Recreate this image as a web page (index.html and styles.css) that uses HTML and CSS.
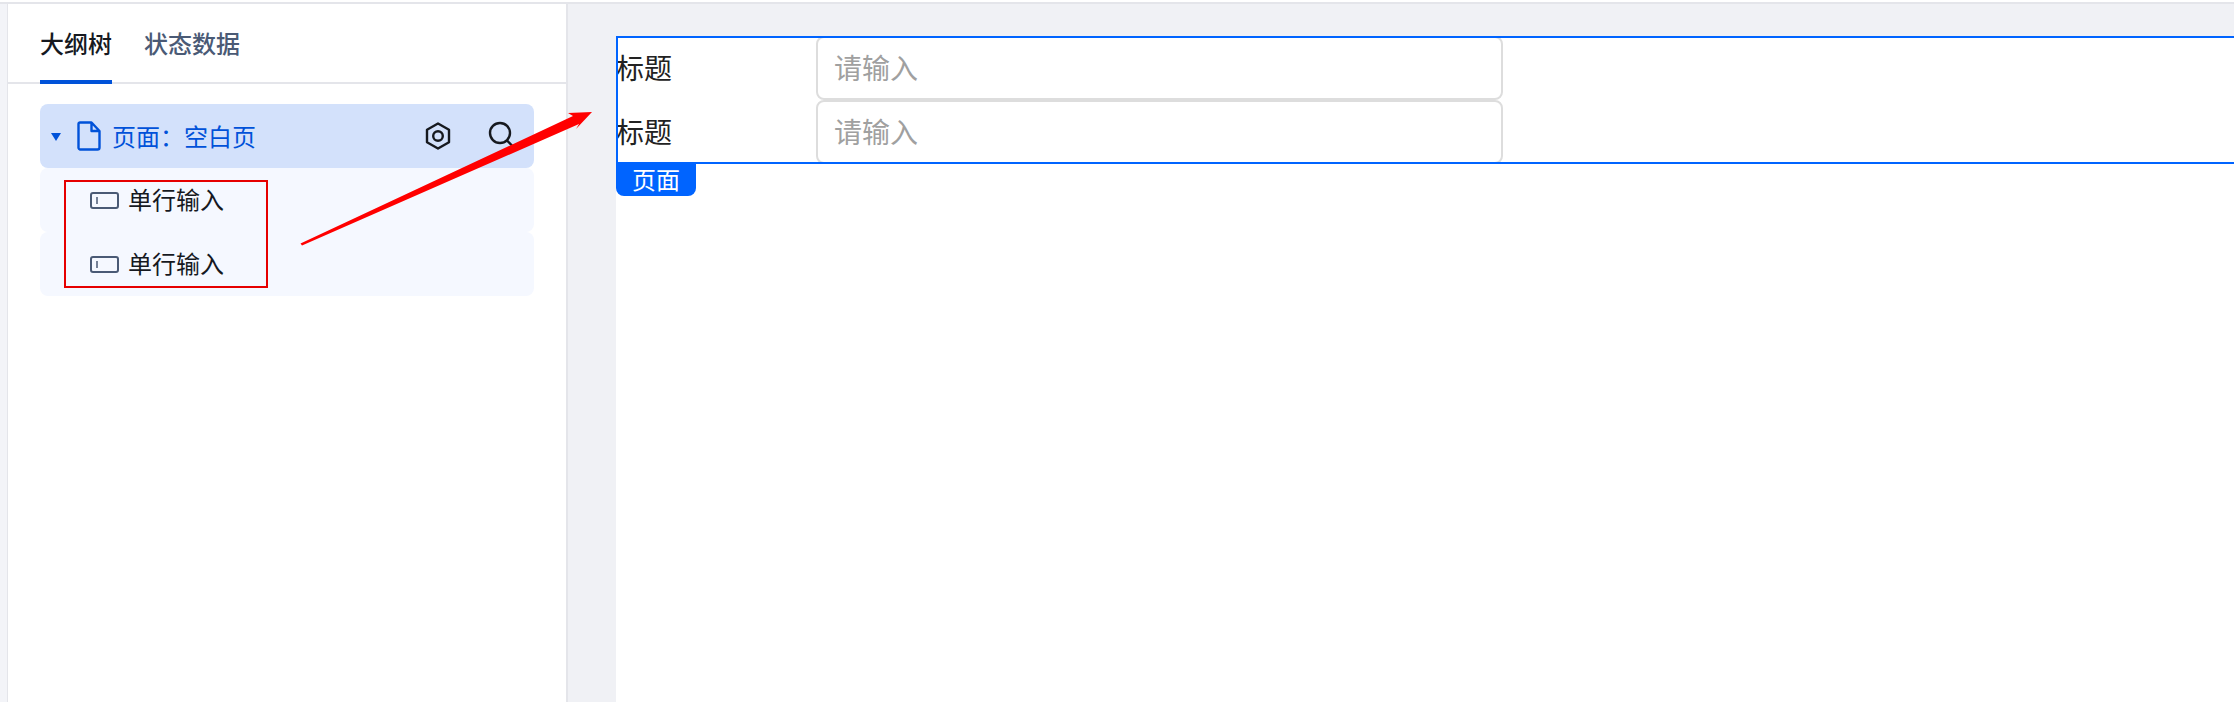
FILE: index.html
```html
<!DOCTYPE html>
<html lang="zh-CN">
<head>
<meta charset="utf-8">
<title>大纲树</title>
<link rel="stylesheet" href="styles.css">
</head>
<body>
<div class="app">
  <div class="topbar"></div>
  <div class="main">
    <div class="rail"></div>
    <aside class="panel">
      <nav class="tabs">
        <span class="tab active">大纲树</span>
        <span class="tab">状态数据</span>
      </nav>
      <div class="tree">
        <div class="node root">
          <svg class="caret" width="10" height="8" viewBox="0 0 10 8"><path d="M0 0h10L5 8z" fill="#0052d9"/></svg>
          <svg class="file" width="24" height="30" viewBox="0 0 24 30"><path d="M3 1.500h11.500l8 8.500v16.500a2 2 0 0 1-2 2H3a2 2 0 0 1-1.500-1.500V3A1.500 1.500 0 0 1 3 1.500z M14.500 1.500V10h8" fill="none" stroke="#0052d9" stroke-width="2.400" stroke-linejoin="round"/></svg>
          <span class="root-label">页面：空白页</span>
          <svg class="hex" width="26" height="28" viewBox="0 0 26 28"><path d="M13 1.500l11 6.250v12.500L13 26.500 2 20.250V7.750z" fill="none" stroke="#16191f" stroke-width="2.400" stroke-linejoin="round"/><circle cx="13" cy="14" r="4.800" fill="none" stroke="#16191f" stroke-width="2.400"/></svg>
          <svg class="search" width="26" height="28" viewBox="0 0 26 28"><circle cx="12" cy="12" r="10" fill="none" stroke="#16191f" stroke-width="2.400"/><path d="M19 19.500l5 5" fill="none" stroke="#16191f" stroke-width="2.400"/></svg>
        </div>
        <div class="node child">
          <svg class="field" width="29" height="17" viewBox="0 0 29 17"><rect x="1" y="1" width="27" height="15" rx="2" fill="none" stroke="#4a5a75" stroke-width="2"/><path d="M7 5v7" stroke="#4a5a75" stroke-width="1.500"/></svg>
          <span class="child-label">单行输入</span>
        </div>
        <div class="node child">
          <svg class="field" width="29" height="17" viewBox="0 0 29 17"><rect x="1" y="1" width="27" height="15" rx="2" fill="none" stroke="#4a5a75" stroke-width="2"/><path d="M7 5v7" stroke="#4a5a75" stroke-width="1.500"/></svg>
          <span class="child-label">单行输入</span>
        </div>
      </div>
    </aside>
    <main class="canvas">
      <div class="sheet">
        <section class="frame">
          <div class="form-row">
            <label class="form-label">标题</label>
            <div class="form-input">请输入</div>
          </div>
          <div class="form-row">
            <label class="form-label">标题</label>
            <div class="form-input">请输入</div>
          </div>
        </section>
        <div class="frame-tag">页面</div>
      </div>
    </main>
  </div>
  <div class="redbox"></div>
  <svg class="arrow" width="310" height="150" viewBox="0 0 310 150"><path d="M0.500 135.500 L273 8 L268 5 L292 4 L276 21 L279 16 L2 137.500 z" fill="#ff0000"/></svg>
</div>
</body>
</html>
```
FILE: styles.css
```css
* { box-sizing: border-box; }
html, body { margin: 0; height: 100%; overflow: hidden; }
body { background: #fff; font-family: "Noto Sans CJK SC", "Liberation Sans", sans-serif; }
.app { position: relative; display: flex; flex-direction: column; height: 702px; }
.topbar { flex: 0 0 4px; border-bottom: 2px solid #e4e5ea; background: #fff; }
.main { flex: 1; display: flex; min-height: 0; }
.rail { flex: 0 0 8px; background: #f3f4f8; border-right: 1px solid #e4e5ea; }
.panel { flex: 0 0 560px; background: #fff; border-right: 2px solid #e4e5ea; }
.tabs { display: flex; gap: 32px; height: 80px; padding-left: 32px; border-bottom: 2px solid #e4e5ea; }
.tab { height: 80px; font-size: 24px; font-weight: 500; line-height: 78px; color: #4a5a75; }
.tab.active { color: #16191f; border-bottom: 4px solid #0052d9; }
.tree { padding: 20px 32px 0; }
.node { display: flex; align-items: center; height: 64px; border-radius: 8px; background: #f5f8ff; }
.root { background: #d3e1fb; padding-left: 11px; }
.caret { margin-top: 2px; }
.file { margin-left: 16px; }
.root-label { margin-left: 11px; margin-top: -2px; font-size: 24px; color: #0052d9; }
.hex { margin-left: 169px; }
.search { margin-left: 37px; margin-top: -2px; }
.child { padding-left: 50px; align-items: flex-start; padding-top: 18px; }
.field { margin-top: 6px; }
.child-label { margin-left: 9px; font-size: 24px; line-height: 26px; color: #16191f; }
.canvas { flex: 1; min-width: 0; padding: 32px 0 0 48px; background: #f0f1f5; }
.sheet { height: 100%; background: #fff; }
.frame { position: relative; height: 128px; background: #fff; }
.frame::after { content: ""; position: absolute; inset: 0; border: 2px solid #0064ff; border-right: 0; pointer-events: none; }
.form-row { display: flex; height: 64px; }
.form-label { flex: 0 0 200px; font-size: 28px; line-height: 62px; color: #222; }
.form-input { flex: 0 0 687px; height: 100%; padding-left: 16px; font-size: 28px; line-height: 58px; color: #a0a0a0; border: 2px solid #ddd; border-radius: 8px; background: #fff; }
.frame-tag { width: 80px; height: 32px; background: #0064ff; color: #fff; font-size: 24px; line-height: 30px; text-align: center; border-radius: 0 0 8px 8px; }
.redbox { position: absolute; left: 64px; top: 180px; width: 204px; height: 108px; border: 2px solid #e60000; }
.arrow { position: absolute; left: 300px; top: 108px; }
```
